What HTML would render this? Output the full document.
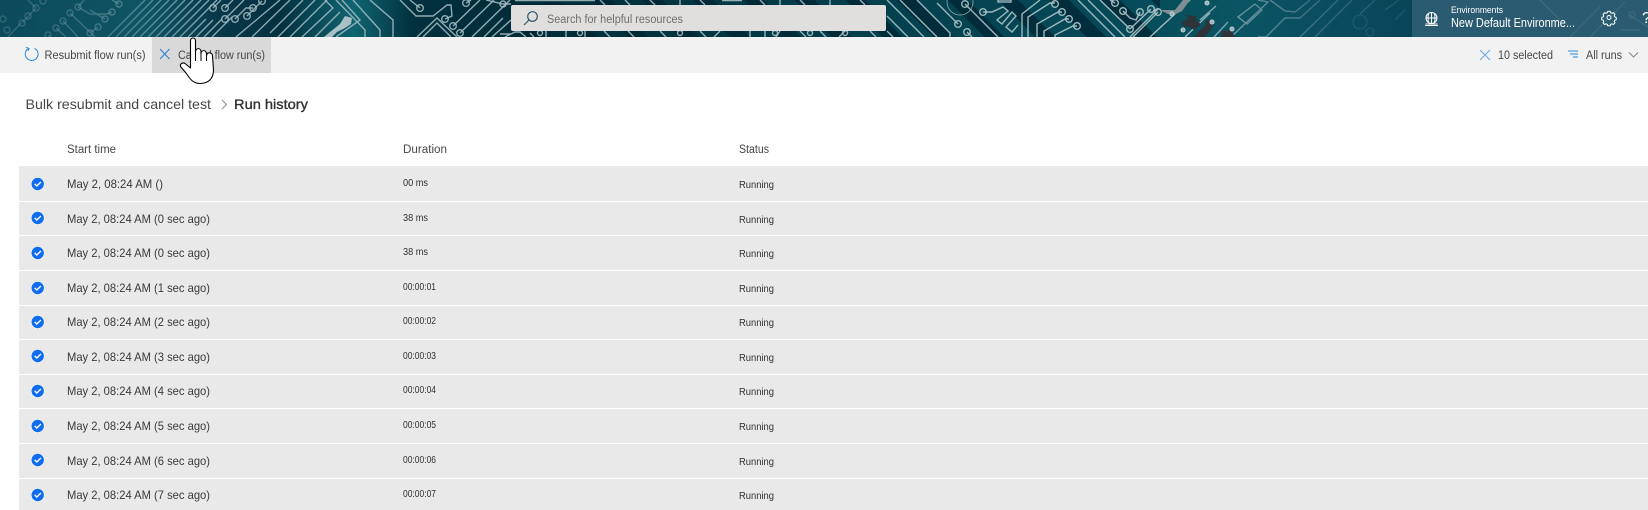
<!DOCTYPE html>
<html><head><meta charset="utf-8"><title>Run history</title>
<style>
html,body{margin:0;padding:0;width:1648px;height:510px;overflow:hidden;background:#fff;font-family:"Liberation Sans",sans-serif}
svg{position:absolute;left:0;top:0;display:block}
text{font-family:"Liberation Sans",sans-serif}
.d{font-size:12px;fill:#3b3a39}
.u{font-size:10.5px;fill:#323130}
.s{font-size:10.5px;fill:#323130}
.h{font-size:11.5px;fill:#484644}
.t{font-size:11.5px;fill:#484644}
</style></head><body>
<svg width="1648" height="510" viewBox="0 0 1648 510">
<defs>
<linearGradient id="bg" x1="0" x2="1" y1="0" y2="0">
<stop offset="0" stop-color="#0c4a5c"/><stop offset=".09" stop-color="#0e5564"/><stop offset=".13" stop-color="#07394a"/><stop offset=".17" stop-color="#04303f"/><stop offset=".215" stop-color="#0f6570"/><stop offset=".25" stop-color="#02303e"/><stop offset=".32" stop-color="#022c3a"/><stop offset=".55" stop-color="#03414e"/><stop offset=".68" stop-color="#054a58"/><stop offset=".75" stop-color="#0a5563"/><stop offset=".8" stop-color="#0a4e60"/><stop offset=".86" stop-color="#0a4457"/>
</linearGradient>
<pattern id="st" width="36" height="36" patternUnits="userSpaceOnUse" patternTransform="rotate(45)"><rect x="0" y="0" width="36" height="14" fill="#012432" opacity=".75"/></pattern>
<linearGradient id="fade" gradientUnits="userSpaceOnUse" x1="0" x2="1648" y1="0" y2="0"><stop offset="0" stop-color="#7fa2ac" stop-opacity=".3"/><stop offset=".06" stop-color="#86a8b1" stop-opacity=".4"/><stop offset=".13" stop-color="#a3bcc3" stop-opacity=".85"/><stop offset=".72" stop-color="#a9c0c6" stop-opacity=".95"/><stop offset=".76" stop-color="#9db6bd" stop-opacity=".6"/><stop offset=".8" stop-color="#8aa7b0" stop-opacity=".35"/><stop offset=".85" stop-color="#7fa0aa" stop-opacity=".18"/></linearGradient>
<g id="c"><circle r="6.800" fill="#fff"/><circle r="6.200" fill="#0f6cf0"/><path d="M-3-.1-.9 2 3.200-2" fill="none" stroke="#fff" stroke-width="1.400"/></g>
</defs>

<rect width="1648" height="37" fill="url(#bg)"/>
<rect x="520" width="640" height="37" fill="url(#st)"/>
<g fill="none" stroke="url(#fade)" stroke-width="1.4">
<path d="M8 37 21 23M22 23 36 8M28 0 36 8M70 13 95 37M63 21 78 37M56 28 66 37M48 35l2 2M78 7 90 14h17l5-2M84 0l-6 7M105 19 90 10M98 27l-8 6M119 4l-7-4"/>
<circle cx="3" cy="19" r="3"/><circle cx="22" cy="23" r="3"/><circle cx="7" cy="30" r="3"/><circle cx="28" cy="16" r="3"/><circle cx="36" cy="8" r="3"/><circle cx="43" cy="1" r="3"/><circle cx="70" cy="13" r="3"/><circle cx="63" cy="21" r="3"/><circle cx="56" cy="28" r="3"/><circle cx="48" cy="35" r="3"/><circle cx="78" cy="7" r="3"/><circle cx="112" cy="12" r="3"/><circle cx="105" cy="19" r="3"/><circle cx="98" cy="27" r="3"/><circle cx="90" cy="33" r="3"/><circle cx="119" cy="4" r="3"/>
<path d="M108 37 145 0M116 37 153 0M124 37 161 0M132 37 169 0M140 37 177 0M148 37 185 0M156 37 193 0M164 37 201 0M172 37 209 0M180 37 217 0M188 37 206 19M196 37 213 20M204 37 222 19M212 37 232 17M213 8 221 0M225 8 233 0M225 19 244 0M235 19 246 8 253 8M247 16 262 1M236 37 280 0M252 37 290 0"/>
<circle cx="213" cy="8" r="3.3"/><circle cx="225" cy="8" r="3.3"/><circle cx="225" cy="19" r="3.3"/><circle cx="235" cy="19" r="3.3"/><circle cx="247" cy="16" r="3.3"/><circle cx="253" cy="8" r="3.3"/><circle cx="262" cy="1" r="3.3"/>
<path d="M270 33 303 0M278 37 315 0M290 37 327 0M302 37 333 8 325 0M315 37 340 12M336 37 360 20 342 0M336 0 365 30V37M353 0 380 30V37M370 0 393 20V37"/>
<path d="M400 0 416 16H433L447 5H451L452 16 445 19M420 8 410 0"/>
<path d="M417 37 437 18 457 37M423 37 437 23 451 37"/>
<circle cx="420" cy="8" r="3.3"/><circle cx="445" cy="19" r="3.3"/><circle cx="453" cy="26" r="3.3"/><circle cx="460" cy="33" r="3.3"/><circle cx="466" cy="3" r="3.3"/>
<path d="M453 26 480 0M460 33 494 0M472 37 510 0M484 37 503 18M466 3l5-3M492 37 511 20"/>
<circle cx="503" cy="4" r="3"/>
<path d="M486 0 503 4H511M511 34H500M505 37 515 32H520L526 37M546 31v6M566 31v6M585 31v6M530 33l4 4M604 31l6 6M628 31l6 6M660 31l6 6M700 31l6 6M720 31l-6 6M750 31v6M765 31v6M780 31l-4 6M800 31l6 6M820 31l6 6M845 31l-6 6M870 31l6 6M515 0.500h80M600 0l5 5M625 0l5 5M650 0l5 5M680 0v5M700 0l5 5M722 0.500h20M760 0l5 5M780 0v5M800 0l5 5M830 0v5M860 0l5 5"/>
<circle cx="540" cy="33" r="2.5"/><circle cx="580" cy="33" r="2.5"/><circle cx="680" cy="33" r="2.5"/><circle cx="775" cy="33" r="2.5"/><circle cx="810" cy="33" r="2.5"/><circle cx="845" cy="33" r="2.5"/>
<path d="M887 0 924 37M900 0 937 37M917 0 950 33V37M887 16 908 37M887 31 893 37M958 24 937 3M967 32l5 5M965 4 998 37"/>
<circle cx="958" cy="24" r="3.3"/><circle cx="967" cy="32" r="3.3"/><circle cx="965" cy="4" r="3.3"/>
<circle cx="960" cy="2" r="13" stroke-width=".7"/>
<path d="M983 12H992L1003 7 1008 11 997 20 1002 24 1012 12 1016 16 1006 27 1012 32 1018 25"/>
<rect x="998" y="0" width="13" height="2"/>
<circle cx="983" cy="12" r="3.3"/>
<path d="M1022 37V14L1040 0M1028 37V17L1050 3h5M1037 37V24L1058 12h4M1044 37V31L1065 19h4M1055 37V35L1073 26h4"/>
<circle cx="1055" cy="4" r="3.3"/><circle cx="1062" cy="12" r="3.3"/><circle cx="1069" cy="19" r="3.3"/><circle cx="1077" cy="26" r="3.3"/>
<path d="M1078 0 1115 37M1088 0 1125 37M1100 0 1130 29M1115 3 1110 0M1123 11 1130 18 1136 20 1140 12M1130 29 1151 9M1158 12 1133 37M1130 37l28-28"/>
<circle cx="1115" cy="3" r="3.3"/><circle cx="1123" cy="11" r="3.3"/><circle cx="1130" cy="29" r="3.3"/><circle cx="1140" cy="12" r="3.3"/><circle cx="1151" cy="9" r="3.3"/><circle cx="1158" cy="12" r="3.3"/>
<path d="M1150 37 1190 0M1172 14 1178 9M1200 20 1216 6M1185 37 1210 13M1214 37 1228 22M1231 37 1268 2 1258 0M1238 17 1255 4 1262 10 1247 24Z"/>
<path d="M1258 37H1266L1285 18H1300L1320 0M1270 0 1285 11 1295 12 1310 0M1300 37 1338 0M1315 37 1352 0M1375 0 1360 14M1385 10l14-10M1395 20l10-10"/>
<circle cx="1360" cy="22" r="7" stroke-width=".8"/><circle cx="1370" cy="32" r="4" stroke-width=".8"/>
</g>
<g fill="#2e343a">
<path d="M1186 15 1196 16 1197 21 1201 24 1194 30 1190 27 1184 27 1181 22 1186 20 1188 18Z"/>
<path d="M1206 20 1214 20 1213 26 1210 31 1204 37H1194L1200 30 1205 26Z"/>
<path d="M1222 31 1230 30 1234 35 1236 37H1221Z"/>
</g>
<path d="M1160 10H1175L1183 0H1190L1182 11 1176 14H1168Z" fill="#7f8f94"/>
<path d="M345 16 352 18 351 24 345 28 337 32 332 37H324L330 32 340 24Z" fill="#a9c0c6"/>
<g fill="#94aeb5" stroke="#c0d0d4" stroke-width="1"><circle cx="1212" cy="22" r="2"/><circle cx="1232" cy="29" r="2"/><circle cx="1172" cy="14" r="2"/><circle cx="1183" cy="30" r="2"/><circle cx="1207" cy="3" r="2"/></g>

<rect x="511" y="5" width="375" height="26" rx="2" fill="#e1dfdd"/>
<g fill="none" stroke="#2c5a69" stroke-width="1.2"><circle cx="532.5" cy="16.5" r="4.8"/><path d="M529 20 524 25"/></g>
<text x="547" y="23" font-size="11.5" fill="#6f6c69" textLength="136" lengthAdjust="spacingAndGlyphs">Search for helpful resources</text>

<rect x="1412" width="236" height="37" fill="#2b5b70"/>
<g fill="none" stroke="#5a8292" stroke-width="1" opacity=".45"><path d="M1570 37 1600 7M1590 37 1625 2M1620 30h20M1630 15l18 12M1540 0l20 20"/><circle cx="1632" cy="15" r="3"/></g>
<g fill="none" stroke="#fff" stroke-width="1"><circle cx="1431.5" cy="18" r="5.500"/><path d="M1426 18h11M1431.500 12.500v11M1428.500 13.500q-1 4.500 0 9M1434.500 13.500q1 4.500 0 9M1425.500 24h12M1425 25.500h13"/></g>
<text x="1451" y="13" font-size="9.5" fill="#fff" textLength="52" lengthAdjust="spacingAndGlyphs">Environments</text>
<text x="1451" y="27" font-size="12.5" fill="#fff" textLength="124" lengthAdjust="spacingAndGlyphs">New Default Environme...</text>
<g fill="none" stroke="#fff" stroke-width="1.200" transform="translate(1609 17.500) scale(.82) translate(-1609 -17.500)"><circle cx="1609" cy="17.500" r="2.500"/><path d="M1607.500 10h3l.5 1.700 1.600.7 1.600-.9 2.100 2.100-.9 1.600.7 1.600 1.700.5v3l-1.700.5-.7 1.600.9 1.600-2.100 2.100-1.600-.9-1.600.7-.5 1.700h-3l-.5-1.700-1.600-.7-1.600.9-2.100-2.100.9-1.600-.7-1.600-1.700-.5v-3l1.700-.5.7-1.600-.9-1.600 2.100-2.100 1.600.9 1.600-.7z"/></g>
<text x="1642" y="23" font-size="16" fill="#fff">?</text>

<rect y="37" width="1648" height="36" fill="#f2f2f2"/>
<rect x="152" y="37" width="119" height="36" fill="#d8d9d8"/>
<path d="M34.500 48.300A6.400 6.400 0 1 1 28 48.800" fill="none" stroke="#2b88d8" stroke-width="1"/>
<path d="M26 47.200l3 1.300-1 2.500" fill="none" stroke="#2b88d8" stroke-width="1"/>
<text x="44.500" y="59" class="t" textLength="101" lengthAdjust="spacingAndGlyphs">Resubmit flow run(s)</text>
<path d="M160 49 169.500 59M169.500 49 160 59" stroke="#2b7cd3" stroke-width="1" fill="none"/>
<text x="178" y="59" class="t" textLength="87" lengthAdjust="spacingAndGlyphs">Cancel flow run(s)</text>
<path d="M1480 50 1490 60M1490 50 1480 60" stroke="#6ea7e6" stroke-width="1" fill="none"/>
<text x="1498" y="59" class="t" textLength="55" lengthAdjust="spacingAndGlyphs">10 selected</text>
<path d="M1568 51h10M1570 54h8M1573 57h5" stroke="#2b88d8" stroke-width="1" fill="none"/>
<text x="1586" y="59" class="t" textLength="36" lengthAdjust="spacingAndGlyphs">All runs</text>
<path d="M1629 52.500 1633.500 57 1638 52.500" stroke="#8a8886" stroke-width="1" fill="none"/>

<text x="25.500" y="109" font-size="14" fill="#484644" textLength="185.500" lengthAdjust="spacingAndGlyphs">Bulk resubmit and cancel test</text>
<path d="M222 100 226.500 104.500 222 109" stroke="#8a8886" stroke-width="1" fill="none"/>
<text x="234" y="109" font-size="14" fill="#323130" stroke="#323130" stroke-width=".35" textLength="74" lengthAdjust="spacingAndGlyphs">Run history</text>

<text x="67" y="153" class="h" textLength="49" lengthAdjust="spacingAndGlyphs">Start time</text>
<text x="403" y="153" class="h" textLength="44" lengthAdjust="spacingAndGlyphs">Duration</text>
<text x="739" y="153" class="h" textLength="30" lengthAdjust="spacingAndGlyphs">Status</text>

<rect x="19" y="166" width="1629" height="344" fill="#e9e9e9"/>
<g fill="#fff">
<rect x="19" y="201" width="1629" height="1"/><rect x="19" y="235" width="1629" height="1"/><rect x="19" y="270" width="1629" height="1"/><rect x="19" y="305" width="1629" height="1"/><rect x="19" y="339" width="1629" height="1"/><rect x="19" y="374" width="1629" height="1"/><rect x="19" y="408" width="1629" height="1"/><rect x="19" y="443" width="1629" height="1"/><rect x="19" y="478" width="1629" height="1"/>
</g>
<use href="#c" x="37.700" y="184"/><use href="#c" x="37.700" y="218"/><use href="#c" x="37.700" y="253"/><use href="#c" x="37.700" y="288"/><use href="#c" x="37.700" y="322"/><use href="#c" x="37.700" y="356"/><use href="#c" x="37.700" y="391"/><use href="#c" x="37.700" y="426"/><use href="#c" x="37.700" y="460"/><use href="#c" x="37.700" y="495"/>

<text x="67" y="188" class="d" textLength="96" lengthAdjust="spacingAndGlyphs">May 2, 08:24 AM ()</text>
<text x="67" y="223" class="d" textLength="143" lengthAdjust="spacingAndGlyphs">May 2, 08:24 AM (0 sec ago)</text>
<text x="67" y="257" class="d" textLength="143" lengthAdjust="spacingAndGlyphs">May 2, 08:24 AM (0 sec ago)</text>
<text x="67" y="292" class="d" textLength="143" lengthAdjust="spacingAndGlyphs">May 2, 08:24 AM (1 sec ago)</text>
<text x="67" y="326" class="d" textLength="143" lengthAdjust="spacingAndGlyphs">May 2, 08:24 AM (2 sec ago)</text>
<text x="67" y="361" class="d" textLength="143" lengthAdjust="spacingAndGlyphs">May 2, 08:24 AM (3 sec ago)</text>
<text x="67" y="395" class="d" textLength="143" lengthAdjust="spacingAndGlyphs">May 2, 08:24 AM (4 sec ago)</text>
<text x="67" y="430" class="d" textLength="143" lengthAdjust="spacingAndGlyphs">May 2, 08:24 AM (5 sec ago)</text>
<text x="67" y="465" class="d" textLength="143" lengthAdjust="spacingAndGlyphs">May 2, 08:24 AM (6 sec ago)</text>
<text x="67" y="499" class="d" textLength="143" lengthAdjust="spacingAndGlyphs">May 2, 08:24 AM (7 sec ago)</text>

<text x="403" y="186" class="u" textLength="25" lengthAdjust="spacingAndGlyphs">00 ms</text>
<text x="403" y="221" class="u" textLength="25" lengthAdjust="spacingAndGlyphs">38 ms</text>
<text x="403" y="255" class="u" textLength="25" lengthAdjust="spacingAndGlyphs">38 ms</text>
<text x="403" y="290" class="u" textLength="33" lengthAdjust="spacingAndGlyphs">00:00:01</text>
<text x="403" y="324" class="u" textLength="33" lengthAdjust="spacingAndGlyphs">00:00:02</text>
<text x="403" y="359" class="u" textLength="33" lengthAdjust="spacingAndGlyphs">00:00:03</text>
<text x="403" y="393" class="u" textLength="33" lengthAdjust="spacingAndGlyphs">00:00:04</text>
<text x="403" y="428" class="u" textLength="33" lengthAdjust="spacingAndGlyphs">00:00:05</text>
<text x="403" y="463" class="u" textLength="33" lengthAdjust="spacingAndGlyphs">00:00:06</text>
<text x="403" y="497" class="u" textLength="33" lengthAdjust="spacingAndGlyphs">00:00:07</text>

<text x="739" y="188" class="s" textLength="35" lengthAdjust="spacingAndGlyphs">Running</text>
<text x="739" y="223" class="s" textLength="35" lengthAdjust="spacingAndGlyphs">Running</text>
<text x="739" y="257" class="s" textLength="35" lengthAdjust="spacingAndGlyphs">Running</text>
<text x="739" y="292" class="s" textLength="35" lengthAdjust="spacingAndGlyphs">Running</text>
<text x="739" y="326" class="s" textLength="35" lengthAdjust="spacingAndGlyphs">Running</text>
<text x="739" y="361" class="s" textLength="35" lengthAdjust="spacingAndGlyphs">Running</text>
<text x="739" y="395" class="s" textLength="35" lengthAdjust="spacingAndGlyphs">Running</text>
<text x="739" y="430" class="s" textLength="35" lengthAdjust="spacingAndGlyphs">Running</text>
<text x="739" y="465" class="s" textLength="35" lengthAdjust="spacingAndGlyphs">Running</text>
<text x="739" y="499" class="s" textLength="35" lengthAdjust="spacingAndGlyphs">Running</text>

<path d="M190.500 41C190.500 37 195.500 37 195.500 41L195.500 52C195.500 47.500 201 47.500 201 52L201 54C201 49.500 206.500 49.500 206.500 54L206.500 56C206.500 51.500 212.500 52 212.500 56L213.500 70C213.500 79 208 83.500 200 83.500C193 83.500 190 79 186 73L180.500 66.500C179.500 64 183 62 185 63.500L190.500 68Z" fill="#fff" stroke="#000" stroke-width="1.100" stroke-linejoin="round"/>
<path d="M195.500 52V61M201 54V61M206.500 56V61" fill="none" stroke="#000" stroke-width="1"/>
</svg>
</body></html>
